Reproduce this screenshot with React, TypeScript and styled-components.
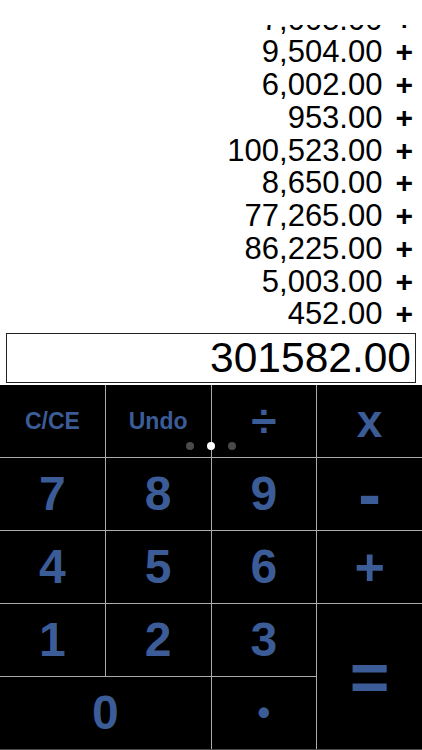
import styled, { createGlobalStyle } from "styled-components";

const GlobalStyle = createGlobalStyle`
  html, body {
    margin: 0;
    padding: 0;
    background: #ffffff;
  }
  body {
    font-family: "Liberation Sans", Arial, Helvetica, sans-serif;
  }
`;

const Screen = styled.div`
  width: 422px;
  height: 750px;
  display: flex;
  flex-direction: column;
  overflow: hidden;
  background: #ffffff;
`;

const Tape = styled.div`
  margin-top: 25px;
  height: 306px;
  flex-shrink: 0;
  overflow: hidden;
  display: flex;
  flex-direction: column;
  justify-content: flex-end;
`;

const TapeRow = styled.div`
  display: flex;
  justify-content: flex-end;
  align-items: baseline;
  gap: 13px;
  padding-right: 9px;
  font-size: 31px;
  line-height: 32.75px;
  color: #000000;
  flex-shrink: 0;
`;

const Amount = styled.span`
  font-weight: 400;
`;

const Op = styled.span`
  font-weight: 700;
  font-size: 30px;
`;

const Display = styled.div`
  margin: 2px 6px 0 6px;
  height: 50px;
  flex-shrink: 0;
  box-sizing: border-box;
  border: 1px solid #222222;
  padding: 0 4px;
  text-align: right;
  font-size: 42.5px;
  line-height: 48px;
  color: #000000;
`;

const Keypad = styled.div`
  position: relative;
  margin-top: 2px;
  flex: 1;
  display: grid;
  grid-template-columns: repeat(4, 1fr);
  grid-template-rows: repeat(5, 1fr);
  gap: 1px;
  background: #ababab;
  border-bottom: 1px solid #4a4a4a;
`;

const Key = styled.button<{ $size: number; $colSpan?: number; $rowSpan?: number }>`
  grid-column: span ${(p) => p.$colSpan ?? 1};
  grid-row: span ${(p) => p.$rowSpan ?? 1};
  display: flex;
  align-items: center;
  justify-content: center;
  margin: 0;
  padding: 0;
  border: none;
  background: #000000;
  color: #3b5c97;
  font-family: "Liberation Sans", Arial, Helvetica, sans-serif;
  font-weight: 700;
  font-size: ${(p) => p.$size}px;
  line-height: 1;
  cursor: pointer;
`;

const PageDots = styled.div`
  position: absolute;
  top: 57px;
  left: 50%;
  transform: translateX(-50%);
  display: flex;
  align-items: center;
  gap: 13px;
`;

const Dot = styled.span<{ $active?: boolean }>`
  width: 8px;
  height: 8px;
  border-radius: 50%;
  background: ${(p) => (p.$active ? "#ffffff" : "#4a4a4a")};
`;

const tape = [
  "7,005.00",
  "9,504.00",
  "6,002.00",
  "953.00",
  "100,523.00",
  "8,650.00",
  "77,265.00",
  "86,225.00",
  "5,003.00",
  "452.00",
];

type TKey = { label: string; size: number; colSpan?: number; rowSpan?: number };

const keys: TKey[] = [
  { label: "C/CE", size: 23 },
  { label: "Undo", size: 23 },
  { label: "÷", size: 46 },
  { label: "x", size: 46 },
  { label: "7", size: 48 },
  { label: "8", size: 48 },
  { label: "9", size: 48 },
  { label: "-", size: 68 },
  { label: "4", size: 48 },
  { label: "5", size: 48 },
  { label: "6", size: 48 },
  { label: "+", size: 52 },
  { label: "1", size: 48 },
  { label: "2", size: 48 },
  { label: "3", size: 48 },
  { label: "=", size: 68, rowSpan: 2 },
  { label: "0", size: 48, colSpan: 2 },
  { label: "•", size: 36 },
];

const App = () => {
  return (
    <>
      <GlobalStyle />
      <Screen>
        <Tape>
          {tape.map((amount, index) => (
            <TapeRow key={index}>
              <Amount>{amount}</Amount>
              <Op>+</Op>
            </TapeRow>
          ))}
        </Tape>
        <Display>301582.00</Display>
        <Keypad>
          {keys.map((key, index) => (
            <Key
              key={index}
              $size={key.size}
              $colSpan={key.colSpan}
              $rowSpan={key.rowSpan}
            >
              {key.label}
            </Key>
          ))}
          <PageDots>
            <Dot />
            <Dot $active />
            <Dot />
          </PageDots>
        </Keypad>
      </Screen>
    </>
  );
};

export default App;
